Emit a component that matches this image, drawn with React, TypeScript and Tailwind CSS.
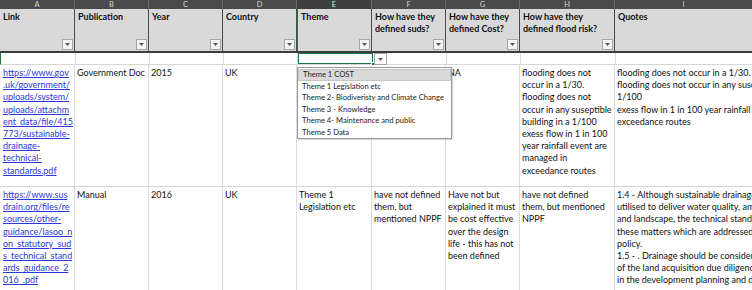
import React from "react";

const GRID =
  "grid grid-cols-[75px_74px_74px_74px_75px_74px_74px_95px_137px]";

const letters = ["A", "B", "C", "D", "E", "F", "G", "H", "I"];

const headers: { text: string[]; filter: boolean }[] = [
  { text: ["Link"], filter: true },
  { text: ["Publication"], filter: true },
  { text: ["Year"], filter: true },
  { text: ["Country"], filter: true },
  { text: ["Theme"], filter: true },
  { text: ["How have they", "defined suds?"], filter: true },
  { text: ["How have they", "defined Cost?"], filter: true },
  { text: ["How have they", "defined flood risk?"], filter: true },
  { text: ["Quotes"], filter: false },
];

function Arrow() {
  return (
    <svg width="5" height="3" viewBox="0 0 5 3" className="block">
      <path d="M0 0 L5 0 L2.5 3 Z" fill="#5a5a5a" />
    </svg>
  );
}

function FilterBtn() {
  return (
    <div className="w-[11px] h-[11px] bg-[#f4f4f4] border border-[#a6a6a6] flex items-center justify-center">
      <Arrow />
    </div>
  );
}

function Lines({ lines, className = "" }: { lines: string[]; className?: string }) {
  return (
    <div className={className}>
      {lines.map((l, i) => (
        <div key={i} className="whitespace-nowrap">
          {l}
        </div>
      ))}
    </div>
  );
}

const row1: string[][] = [
  [
    "https://www.gov",
    ".uk/government/",
    "uploads/system/",
    "uploads/attachm",
    "ent_data/file/415",
    "773/sustainable-",
    "drainage-",
    "technical-",
    "standards.pdf",
  ],
  ["Government Doc"],
  ["2015"],
  ["UK"],
  [],
  [],
  ["NA"],
  [
    "flooding does not",
    "occur in a 1/30.",
    "flooding does not",
    "occur in any suseptible",
    "building in a 1/100",
    "exess flow in 1 in 100",
    "year rainfall event are",
    "managed in",
    "exceedance routes",
  ],
  [
    "flooding does not occur in a 1/30.",
    "flooding does not occur in any suseptible building in a",
    "1/100",
    "exess flow in 1 in 100 year rainfall event are managed in",
    "exceedance routes",
  ],
];

const row2: string[][] = [
  [
    "https://www.sus",
    "drain.org/files/re",
    "sources/other-",
    "guidance/lasoo_n",
    "on_statutory_sud",
    "s_technical_stand",
    "ards_guidance_2",
    "016_.pdf",
  ],
  ["Manual"],
  ["2016"],
  ["UK"],
  ["Theme 1", "Legislation etc"],
  ["have not defined", "them, but", "mentioned NPPF"],
  [
    "Have not but",
    "explained it must",
    "be cost effective",
    "over the design",
    "life - this has not",
    "been defined",
  ],
  ["have not defined", "them, but mentioned", "NPPF"],
  [
    "1.4 - Although sustainable drainage systems can be",
    "utilised to deliver water quality, amenity, biodiversity",
    "and landscape, the technical standards do not address",
    "these matters which are addressed by national planning",
    "policy.",
    "1.5 - . Drainage should be considered as early as part",
    "of the land acquisition due diligence and should inform",
    "in the development planning and design process.",
  ],
];

const themes = [
  "Theme 1 COST",
  "Theme 1 Legislation etc",
  "Theme 2- Biodiveristy and Climate Change",
  "Theme 3 - Knowledge",
  "Theme 4- Maintenance and public",
  "Theme 5 Data",
];

function DataRow({ cells, h }: { cells: string[][]; h: string }) {
  return (
    <div className={`${GRID} ${h} border-b border-[#d6d6d6]`}>
      {cells.map((c, i) => (
        <div
          key={i}
          className={`overflow-hidden pt-[2px] ${i === 0 ? "pl-[3px]" : "pl-[2px]"} ${
            i < 8 ? "border-r border-[#dcdcdc]" : ""
          }`}
        >
          <Lines
            lines={c}
            className={i === 0 ? "text-[#2b39d9] underline decoration-[#2b39d9]" : ""}
          />
        </div>
      ))}
    </div>
  );
}

export default function App() {
  return (
    <div className="relative w-[752px] h-[290px] overflow-hidden bg-white text-[9px] leading-[12.2px] text-[#111] font-[family-name:Lato,sans-serif]">
      {/* column letters */}
      <div className={`${GRID} h-[9px] bg-[#4a4a4a]`}>
        {letters.map((l, i) => (
          <div
            key={l}
            className={`flex items-center justify-center text-[7.5px] leading-[9px] ${
              i === 4 ? "bg-[#3f3f3f] text-[#e8e8e8]" : "text-[#d4d4d4]"
            } ${i < 8 ? "border-r border-[#6a6a6a]" : ""}`}
          >
            {l}
          </div>
        ))}
      </div>

      {/* header row */}
      <div className={`${GRID} h-[44px] bg-[#d9d9d9] border-b-2 border-[#3c3c3c]`}>
        {headers.map((h, i) => (
          <div
            key={i}
            className={`flex flex-col pl-[3px] pt-[2px] pr-[1px] pb-[1px] font-bold ${
              i < 8 ? "border-r border-[#4a4a4a]" : ""
            } ${i === 4 ? "border-l border-l-[#2f6e49]" : ""}`}
          >
            <Lines lines={h.text} />
            {h.filter && (
              <div className="mt-auto self-end">
                <FilterBtn />
              </div>
            )}
          </div>
        ))}
      </div>

      {/* empty row with selected cell */}
      <div className={`${GRID} h-[12px] border-b border-[#d6d6d6] border-l border-l-[#217346]`}>
        {letters.map((l, i) => (
          <div
            key={l}
            className={`relative ${
              i === 4
                ? "border border-[#217346]"
                : i < 8
                ? "border-r border-[#dcdcdc]"
                : ""
            }`}
          >
            {i === 4 && (
              <div className="absolute right-[-3px] bottom-[-3px] w-[4px] h-[4px] bg-[#217346] border border-white" />
            )}
            {i === 5 && (
              <div className="absolute left-[1px] top-0 w-[13px] h-[12px] bg-white border border-[#a6a6a6] flex items-center justify-center">
                <Arrow />
              </div>
            )}
          </div>
        ))}
      </div>

      <DataRow cells={row1} h="h-[122px]" />
      <DataRow cells={row2} h="h-[110px]" />

      {/* data validation dropdown */}
      <div className="absolute left-[297px] top-[67px] w-[155px] h-[72px] bg-white border border-[#9a9a9a] shadow-[1px_1px_1px_rgba(0,0,0,0.15)] pt-[1px] text-[7.6px] leading-[11.6px] text-[#222]">
        {themes.map((t, i) => (
          <div
            key={t}
            className={`pl-[4px] whitespace-nowrap ${
              i === 0 ? "bg-[#d9d9d9] border border-[#c4c4c4] pl-[3px] leading-[9.6px]" : ""
            }`}
          >
            {t}
          </div>
        ))}
      </div>
    </div>
  );
}
